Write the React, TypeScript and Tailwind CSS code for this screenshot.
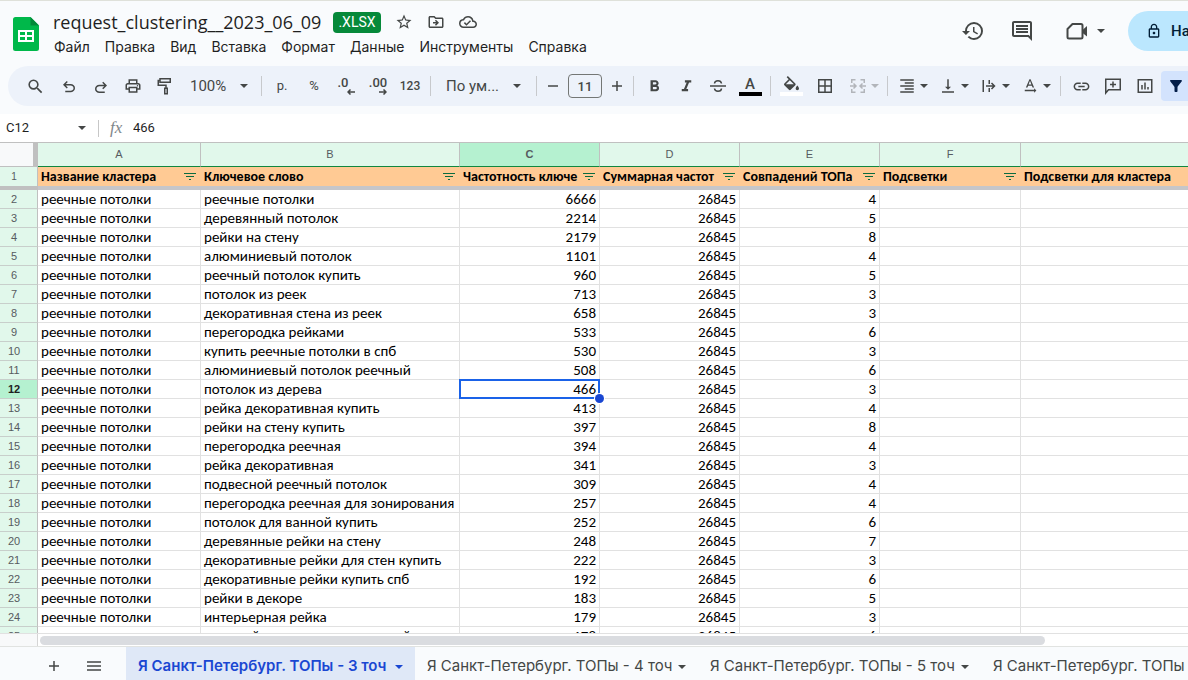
import type { ReactNode } from 'react';
import {
  MdFilterAlt,
  MdFormatAlignRight,
  MdFormatBold,
  MdFormatItalic,
  MdHistory,
  MdLink,
  MdOutlineCloudDone,
  MdOutlineDriveFileMove,
  MdOutlineInsertComment,
  MdOutlineLock,
  MdOutlinePrint,
  MdSearch,
  MdStarBorder,
  MdTextRotationNone,
  MdVerticalAlignBottom,
} from 'react-icons/md';

const menus = ['Файл', 'Правка', 'Вид', 'Вставка', 'Формат', 'Данные', 'Инструменты', 'Справка'];

const columns = ['A', 'B', 'C', 'D', 'E', 'F', ''];

const headings = [
  'Название кластера',
  'Ключевое слово',
  'Частотность ключе',
  'Суммарная частот',
  'Совпадений ТОПа',
  'Подсветки',
  'Подсветки для кластера',
];

const rows: [string, number, number][] = [
  ['реечные потолки', 6666, 4],
  ['деревянный потолок', 2214, 5],
  ['рейки на стену', 2179, 8],
  ['алюминиевый потолок', 1101, 4],
  ['реечный потолок купить', 960, 5],
  ['потолок из реек', 713, 3],
  ['декоративная стена из реек', 658, 3],
  ['перегородка рейками', 533, 6],
  ['купить реечные потолки в спб', 530, 3],
  ['алюминиевый потолок реечный', 508, 6],
  ['потолок из дерева', 466, 3],
  ['рейка декоративная купить', 413, 4],
  ['рейки на стену купить', 397, 8],
  ['перегородка реечная', 394, 4],
  ['рейка декоративная', 341, 3],
  ['подвесной реечный потолок', 309, 4],
  ['перегородка реечная для зонирования', 257, 4],
  ['потолок для ванной купить', 252, 6],
  ['деревянные рейки на стену', 248, 7],
  ['декоративные рейки для стен купить', 222, 3],
  ['декоративные рейки купить спб', 192, 6],
  ['рейки в декоре', 183, 5],
  ['интерьерная рейка', 179, 3],
  ['реечный потолок алюминиевый', 178, 6],
];

const tabs = [
  'Я Санкт-Петербург. ТОПы - 3 точ',
  'Я Санкт-Петербург. ТОПы - 4 точ',
  'Я Санкт-Петербург. ТОПы - 5 точ',
  'Я Санкт-Петербург. ТОПы - 6 точ',
];

function Caret({ className = '' }: { className?: string }) {
  return (
    <svg viewBox="0 0 8 4" className={`h-1 w-2 shrink-0 ${className}`} fill="currentColor" aria-hidden="true">
      <path d="M0 0h8L4 4z" />
    </svg>
  );
}

function Stroke({ children, className = 'size-[18px]' }: { children: ReactNode; className?: string }) {
  return (
    <svg viewBox="0 0 18 18" className={`shrink-0 ${className}`} fill="none" stroke="currentColor" strokeWidth="1.5" aria-hidden="true">
      {children}
    </svg>
  );
}

function Tool({ label, width = 'w-8', children }: { label: string; width?: string; children: ReactNode }) {
  return (
    <button type="button" aria-label={label} className={`flex h-[30px] shrink-0 items-center justify-center ${width}`}>
      {children}
    </button>
  );
}

function DropTool({ label, width = 'w-[41px]', className = '', children }: { label: string; width?: string; className?: string; children: ReactNode }) {
  return (
    <button type="button" aria-label={label} className={`flex h-[30px] shrink-0 items-center gap-1 pl-[6px] ${width} ${className}`}>
      {children}
      <Caret />
    </button>
  );
}

function Divider() {
  return <span className="mx-1 h-5 w-px shrink-0 bg-[#c7c9cc]" />;
}

function SheetsLogo() {
  return (
    <svg viewBox="0 0 26 34" className="h-[34px] w-[26px]" aria-hidden="true">
      <path d="M2.500 0H17.500L26 8.500V31.500A2.500 2.500 0 0 1 23.500 34H2.500A2.500 2.500 0 0 1 0 31.500V2.500A2.500 2.500 0 0 1 2.500 0Z" fill="#00b84a" />
      <path d="M17.500 0L26 8.500H17.500Z" fill="#028938" />
      <path d="M5 13h16v12H5zM7 15v3h5v-3zm7 0v3h5v-3zm-7 5v3h5v-3zm7 0v3h5v-3z" fill="#fff" fillRule="evenodd" />
    </svg>
  );
}

function Header() {
  return (
    <header className="flex h-[65px] shrink-0 items-start pl-[13px]">
      <a href="#home" aria-label="Таблицы" className="mt-4 shrink-0">
        <SheetsLogo />
      </a>
      <div className="ml-[14px] grow">
        <div className="mt-[10px] flex h-[22px] items-center">
          <h1 className="whitespace-nowrap font-['Open_Sans'] text-[18px] leading-[22px] text-[#1f1f1f]">request_clustering__2023_06_09</h1>
          <span className="ml-3 flex h-[21px] items-center rounded bg-[#06893a] px-[5px] font-[Roboto] text-[14px] text-white">.XLSX</span>
          <div className="ml-[14px] flex items-center gap-[14px] text-[#444746]">
            <button type="button" aria-label="Пометить"><MdStarBorder className="size-[18px]" /></button>
            <button type="button" aria-label="Переместить"><MdOutlineDriveFileMove className="size-[18px]" /></button>
            <button type="button" aria-label="Состояние документа"><MdOutlineCloudDone className="size-[18px]" /></button>
          </div>
        </div>
        <nav className="mt-1 flex gap-[15px] pl-px font-[Inter] text-[14px] leading-[20px] text-[#1f1f1f]">
          {menus.map((menu) => (
            <button key={menu} type="button">{menu}</button>
          ))}
        </nav>
      </div>
      <div className="flex shrink-0 items-center pt-[10px] text-[#444746]">
        <button type="button" aria-label="История версий"><MdHistory className="size-6" /></button>
        <button type="button" aria-label="Комментарии" className="ml-[25px]"><MdOutlineInsertComment className="size-6" /></button>
        <button type="button" aria-label="Видеовстреча" className="ml-8 flex items-center">
          <svg viewBox="0 0 22 18" className="h-[18px] w-[22px]" aria-hidden="true">
            <path d="M6.500 2H15a1.500 1.500 0 0 1 1.500 1.500V15A1.500 1.500 0 0 1 15 16.500H3A1.500 1.500 0 0 1 1.500 15V7z" fill="none" stroke="currentColor" strokeWidth="2" strokeLinejoin="round" />
            <path d="M16 8.500L21 4v10.500L16 10.500z" fill="currentColor" />
          </svg>
          <Caret className="ml-[9px]" />
        </button>
        <div className="ml-[23px] w-[60px]">
          <button type="button" className="flex h-10 items-center whitespace-nowrap rounded-full bg-[#bbe7fe] pl-[18px] pr-6 font-[Roboto] text-[15px] font-medium text-[#001d35]">
            <MdOutlineLock className="mr-[9px] size-4" />
            Настройки Доступа
          </button>
        </div>
      </div>
    </header>
  );
}

function Toolbar() {
  return (
    <div role="toolbar" aria-label="Панель инструментов" className="ml-2 flex h-10 shrink-0 items-center rounded-l-full bg-[#edf2fa] pl-[11px] font-[Roboto] text-[#444746]">
      <Tool label="Поиск"><MdSearch className="size-[19px]" /></Tool>
      <div className="ml-[2px] flex">
        <Tool label="Отменить">
          <svg viewBox="0 -960 960 960" className="mt-[2px] size-[18px]" fill="currentColor" aria-hidden="true">
            <path d="M280-200v-80h284q63 0 109.500-40T720-420q0-60-46.500-100T564-560H312l104 104-56 56-200-200 200-200 56 56-104 104h252q97 0 169.500 63T800-420q0 94-72.500 157T564-200H280Z" />
          </svg>
        </Tool>
        <Tool label="Повторить">
          <svg viewBox="0 -960 960 960" className="mt-[2px] size-[18px]" fill="currentColor" aria-hidden="true">
            <path d="M396-200q-97 0-169.500-63T160-420q0-94 66.500-157T396-640h252L544-744l56-56 200 200-200 200-56-56 104-104H396q-63 0-109.500 40T240-420q0 60 46.500 100T396-280h284v80H396Z" transform="translate(0 40)" />
          </svg>
        </Tool>
      </div>
      <Tool label="Печать"><MdOutlinePrint className="size-[18px]" /></Tool>
      <Tool label="Копировать форматирование">
        <Stroke>
          <path d="M4 1.750h10.250v3.500H4zM4 3.500H2.250v4.750H10v3" />
          <path d="M8.750 11.250h2.500v5.500h-2.500z" />
        </Stroke>
      </Tool>
      <button type="button" className="flex h-[30px] w-[76px] shrink-0 items-center justify-between pl-[9px] pr-[9px] text-[15px]">
        100%
        <Caret />
      </button>
      <Divider />
      <Tool label="Денежный формат"><span className="text-[13px]">р.</span></Tool>
      <Tool label="Процентный формат"><span className="text-[13px]">%</span></Tool>
      <Tool label="Уменьшить число знаков">
        <span className="flex flex-col items-end text-[13px] font-medium leading-[12px]">
          <span className="pr-[6px]">.0</span>
          <svg viewBox="0 0 8 6" className="h-[6px] w-2" fill="none" stroke="currentColor" strokeWidth="1.500" aria-hidden="true"><path d="M8 3H1M3.500 .5L1 3l2.500 2.500" /></svg>
        </span>
      </Tool>
      <Tool label="Увеличить число знаков">
        <span className="flex flex-col items-end text-[13px] font-medium leading-[12px]">
          <span>.00</span>
          <svg viewBox="0 0 8 6" className="h-[6px] w-2" fill="none" stroke="currentColor" strokeWidth="1.500" aria-hidden="true"><path d="M0 3h7M4.500 .5L7 3 4.500 5.500" /></svg>
        </span>
      </Tool>
      <Tool label="Другие форматы"><span className="text-[12px] font-medium">123</span></Tool>
      <Divider />
      <button type="button" className="flex h-[30px] w-[97px] shrink-0 items-center justify-between pl-[11px] pr-[11px] text-[15px]">
        По ум...
        <Caret />
      </button>
      <Divider />
      <Tool label="Уменьшить размер шрифта" width="w-6">
        <Stroke><path d="M4 9h10" /></Stroke>
      </Tool>
      <input aria-label="Размер шрифта" defaultValue="11" className="mx-[3px] h-6 w-[34px] shrink-0 rounded border border-[#747775] text-center text-[13px] font-medium" />
      <Tool label="Увеличить размер шрифта" width="w-6">
        <Stroke><path d="M4 9h10M9 4v10" /></Stroke>
      </Tool>
      <Divider />
      <Tool label="Полужирный"><MdFormatBold className="size-[19px]" /></Tool>
      <Tool label="Курсив"><MdFormatItalic className="size-[19px]" /></Tool>
      <Tool label="Зачеркнутый">
        <Stroke>
          <path d="M1 9h16" />
          <path d="M12.500 6.500C12.200 4.600 10.800 3.700 9 3.700S5.600 4.700 5.500 6.500M5.500 11.500c.2 1.900 1.600 2.800 3.500 2.800s3.400-.9 3.500-2.800" />
        </Stroke>
      </Tool>
      <Tool label="Цвет текста">
        <span className="flex flex-col items-center text-[15px] font-medium leading-[15px]">
          A
          <span className="h-1 w-[23px] bg-black" />
        </span>
      </Tool>
      <Divider />
      <Tool label="Цвет заливки">
        <span className="flex flex-col items-center">
          <svg viewBox="2 0 20 18" className="h-[15px] w-[17px]" fill="currentColor" aria-hidden="true">
            <path d="M16.560 8.940L7.620 0 6.210 1.410l2.380 2.380-5.150 5.150c-.59.59-.59 1.540 0 2.120l5.500 5.500c.29.29.68.44 1.060.44s.77-.15 1.060-.44l5.500-5.500c.59-.58.59-1.530 0-2.120zM5.210 10L10 5.210 14.790 10H5.210zM19 11.500s-2 2.170-2 3.500c0 1.100.9 2 2 2s2-.9 2-2c0-1.330-2-3.500-2-3.500z" />
          </svg>
          <span className="mt-px h-1 w-[23px] bg-white" />
        </span>
      </Tool>
      <Tool label="Границы" width="w-9">
        <Stroke><path d="M2.750 2.750h12.500v12.500H2.750zM9 2.750v12.500M2.750 9h12.500" /></Stroke>
      </Tool>
      <DropTool label="Объединить ячейки" width="w-10" className="text-[#b2b5ba]">
        <Stroke>
          <path d="M6.500 2.750H2.750V6M11.500 2.750h3.750V6M6.500 15.250H2.750V12M11.500 15.250h3.750V12M1 9h5.500M4.500 6.500L7 9l-2.500 2.500M17 9h-5.500M13.500 6.500L11 9l2.500 2.500" />
        </Stroke>
      </DropTool>
      <Divider />
      <DropTool label="Выравнивание"><MdFormatAlignRight className="size-[18px] shrink-0" /></DropTool>
      <DropTool label="Вертикальное выравнивание"><MdVerticalAlignBottom className="size-[18px] shrink-0" /></DropTool>
      <DropTool label="Перенос текста">
        <Stroke><path d="M3.250 3v12M9.250 3v4M9.250 11v4M6 9h8.500M11.500 6l3 3-3 3" /></Stroke>
      </DropTool>
      <DropTool label="Поворот текста"><MdTextRotationNone className="size-[18px] shrink-0" /></DropTool>
      <Divider />
      <Tool label="Ссылка"><MdLink className="size-[19px]" /></Tool>
      <Tool label="Добавить комментарий">
        <Stroke><path d="M1.750 16V2.250h14.500v10.500H4.500zM9 4.500v6M6 7.500h6" /></Stroke>
      </Tool>
      <Tool label="Диаграмма">
        <Stroke><path d="M2.250 2.750h13.500v12.500H2.250zM6 8v4.500M9 5.500v7M12 10v2.500" /></Stroke>
      </Tool>
      <button type="button" aria-label="Фильтр" className="flex h-[30px] min-w-[27px] grow items-center rounded-l bg-[#d3e3fd] pl-[6px] text-[#041e49]">
        <MdFilterAlt className="size-[18px] shrink-0" />
      </button>
    </div>
  );
}

function FormulaBar() {
  return (
    <div className="mt-2 flex h-[28px] shrink-0 items-center bg-white text-[#1f1f1f]">
      <input aria-label="Имя ячейки" defaultValue="C12" className="w-[78px] shrink-0 bg-transparent pl-[6px] font-[Roboto] text-[13px]" />
      <Caret className="text-[#444746]" />
      <span className="ml-3 h-[17px] w-px bg-[#c7c7c7]" />
      <span className="ml-[11px] w-[23px] font-['Liberation_Serif'] text-[17px] italic text-[#80868b]">fx</span>
      <input aria-label="Формула" defaultValue="466" className="min-w-0 grow bg-transparent font-[Roboto] text-[13px]" />
    </div>
  );
}

function FilterMark() {
  return (
    <svg viewBox="0 0 12 8" className="h-2 w-3 shrink-0" fill="#0b6b3f" aria-hidden="true">
      <path d="M0 0h12v1H0zM2 3h8v1H2zM5 6h2v1H5z" />
    </svg>
  );
}

function Grid() {
  return (
    <div className="min-h-0 grow overflow-hidden border-y border-t-[#c0c0c0] border-b-[#e1e1e1] bg-white">
      <table className="w-full table-fixed border-separate border-spacing-0 text-black">
        <colgroup>
          <col className="w-[38px]" />
          <col className="w-[163px]" />
          <col className="w-[259px]" />
          <col className="w-[140px]" />
          <col className="w-[140px]" />
          <col className="w-[140px]" />
          <col className="w-[141px]" />
          <col />
        </colgroup>
        <thead>
          <tr className="h-6">
            <td className="border-b border-r-[5px] border-[#c0c0c0] bg-[#f8f9fa] p-0" />
            {columns.map((name, index) => (
              <th
                key={index}
                scope="col"
                className={`border-b border-r border-b-[#11873f] border-r-[#c0c0c0] p-0 text-center font-['Liberation_Sans'] text-[11px] text-[#575b5f] last:border-r-0 ${name === 'C' ? 'bg-[#b5f1d0] font-bold' : 'bg-[#e1f8eb] font-normal'}`}
              >
                {name}
              </th>
            ))}
          </tr>
          <tr className="h-[23px]">
            <th scope="row" className="border-b-4 border-r border-[#c0c0c0] bg-[#e1f8eb] p-0 pr-[9px] text-center font-['Liberation_Sans'] text-[10px] font-normal leading-[18px] text-[#575b5f]">1</th>
            {headings.map((text, index) => (
              <td key={text} className="border-b-4 border-b-[#c6c6c9] bg-[#ffca94] p-0">
                <div className="flex h-[19px] items-center gap-[5px] pl-[3px] pr-[5px]">
                  <span className="grow overflow-hidden whitespace-nowrap font-[Carlito,Lato,'Noto_Sans'] text-[14px] font-bold leading-[19px]">{text}</span>
                  {index < 6 && <FilterMark />}
                </div>
              </td>
            ))}
          </tr>
        </thead>
        <tbody className="font-[Carlito,Lato,'Noto_Sans'] text-[15px] leading-[18px]">
          {rows.map(([keyword, frequency, matches], index) => {
            const active = index === 10;
            const cell = 'h-[19px] overflow-hidden whitespace-nowrap border-b border-r border-[#e1e1e1] px-[3px] py-0 last:border-r-0';
            return (
              <tr key={keyword}>
                <th
                  scope="row"
                  className={`h-[19px] border-b border-r border-b-[#c8cfcb] border-r-[#c0c0c0] p-0 pr-[9px] text-center font-['Liberation_Sans'] text-[11px] leading-[16px] ${active ? 'bg-[#b5f1d0] font-bold text-[#1f1f1f]' : 'bg-[#e1f8eb] font-normal text-[#575b5f]'}`}
                >
                  {index + 2}
                </th>
                <td className={cell}>реечные потолки</td>
                <td className={cell}>{keyword}</td>
                {active ? (
                  <td className="relative h-[19px] border-b border-r border-[#e1e1e1] px-[3px] py-0 text-right">
                    {frequency}
                    <span className="absolute -inset-px border-2 border-[#1a62e8]" />
                    <span className="absolute -bottom-[5px] -right-[5px] z-10 size-[9px] rounded-full bg-[#1a47d2] ring-1 ring-white" />
                  </td>
                ) : (
                  <td className={`${cell} text-right`}>{frequency}</td>
                )}
                <td className={`${cell} text-right`}>26845</td>
                <td className={`${cell} text-right`}>{matches}</td>
                <td className={cell} />
                <td className={cell} />
              </tr>
            );
          })}
        </tbody>
      </table>
    </div>
  );
}

function BottomBar() {
  return (
    <footer className="shrink-0">
      <div className="flex h-[12px] items-center bg-white">
        <div className="mr-[2px] h-full w-[38px] shrink-0 border-r border-[#d5d5d5] bg-[#f8f9fa]" />
        <div className="grow">
          <div className="h-[9px] w-7/8 rounded-full bg-[#dadce0]" />
        </div>
      </div>
      <div className="flex h-[34px] items-stretch overflow-hidden border-t border-[#e1e3e1] text-[#444746]">
        <button type="button" aria-label="Добавить лист" className="ml-[34px] flex w-10 shrink-0 items-center justify-center pt-1">
          <Stroke><path d="M4 9h10M9 4v10" /></Stroke>
        </button>
        <button type="button" aria-label="Все листы" className="mr-3 flex w-10 shrink-0 items-center justify-center pt-1">
          <Stroke><path d="M2 5h14M2 9h14M2 13h14" /></Stroke>
        </button>
        {tabs.map((tab, index) => (
          <button
            key={tab}
            type="button"
            className={`flex shrink-0 items-center justify-between whitespace-nowrap px-3 pt-[6px] font-[Inter] text-[15px] ${index === 0 ? 'w-[289px] bg-[#dfe8f7] font-semibold text-[#1a47d2]' : 'w-[283px] font-normal'}`}
          >
            {tab}
            <Caret />
          </button>
        ))}
      </div>
    </footer>
  );
}

export default function App() {
  return (
    <div className="flex h-screen flex-col overflow-hidden border-t border-[#dfe1da] bg-[#f9fbfd]">
      <Header />
      <Toolbar />
      <FormulaBar />
      <Grid />
      <BottomBar />
    </div>
  );
}
